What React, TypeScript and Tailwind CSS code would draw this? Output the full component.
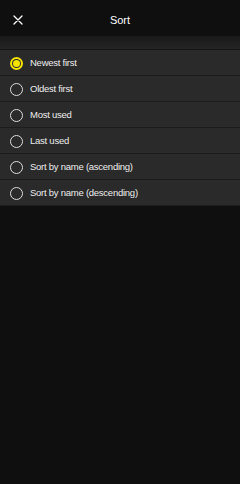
import React, { useState } from "react";

const options = [
  "Newest first",
  "Oldest first",
  "Most used",
  "Last used",
  "Sort by name (ascending)",
  "Sort by name (descending)",
];

export default function App() {
  const [selected, setSelected] = useState(0);

  return (
    <div className="w-[240px] h-[484px] bg-[#0f0f0f] text-white font-['Liberation_Sans',Arial,sans-serif] overflow-hidden">
      {/* Header */}
      <div className="h-[36px] pt-[4px] flex items-center relative">
        <button className="w-[36px] h-[32px] flex items-center justify-center">
          <svg width="10" height="10" viewBox="0 0 10 10" fill="none" stroke="#fff" strokeWidth="1.3" strokeLinecap="round">
            <path d="M1 1L9 9M9 1L1 9" />
          </svg>
        </button>
        <span className="absolute left-0 right-0 top-[4px] h-[32px] flex items-center justify-center text-[11px] pointer-events-none">Sort</span>
      </div>

      {/* Spacer band */}
      <div className="h-[13px] bg-gradient-to-b from-[#191919] to-[#242424]" />
      <div className="h-[1px] bg-[#151515]" />

      {/* Options */}
      <div className="flex flex-col">
        {options.map((label, i) => {
          const active = i === selected;
          return (
            <button
              key={label}
              onClick={() => setSelected(i)}
              className="h-[26px] pt-[1px] flex items-center gap-[7px] pl-[10px] bg-[#2a2a2a] border-b border-[#1c1c1c] text-left"
            >
              {active ? (
                <span className="w-[13px] h-[13px] rounded-full bg-[#f5e400] flex items-center justify-center">
                  <span className="w-[9px] h-[9px] rounded-full bg-[#2a2a2a] flex items-center justify-center">
                    <span className="w-[7px] h-[7px] rounded-full bg-[#f5e400]" />
                  </span>
                </span>
              ) : (
                <span className="w-[13px] h-[13px] rounded-full border-[1.5px] border-[#dcdcdc]" />
              )}
              <span className="text-[9.5px] tracking-[-0.25px] text-[#ececec]">{label}</span>
            </button>
          );
        })}
      </div>
    </div>
  );
}
